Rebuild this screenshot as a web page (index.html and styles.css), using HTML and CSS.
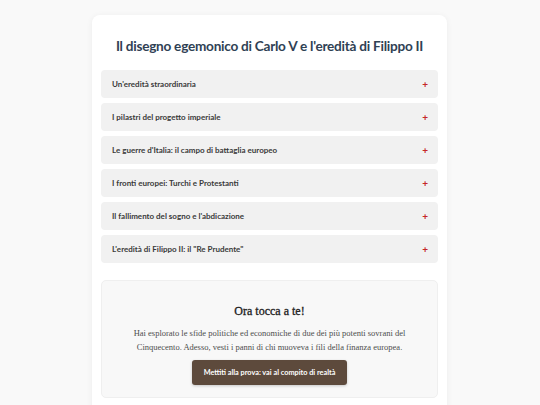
FILE: index.html
```html
<!DOCTYPE html>
<html lang="it">
<head>
<meta charset="utf-8">
<link rel="stylesheet" href="styles.css">
</head>
<body>
<main class="card">
  <h1 class="title">Il disegno egemonico di Carlo V e l'eredità di Filippo II</h1>
  <div class="accordion">
    <div class="item"><span class="label">Un'eredità straordinaria</span><span class="plus">+</span></div>
    <div class="item"><span class="label">I pilastri del progetto imperiale</span><span class="plus">+</span></div>
    <div class="item"><span class="label">Le guerre d'Italia: il campo di battaglia europeo</span><span class="plus">+</span></div>
    <div class="item"><span class="label">I fronti europei: Turchi e Protestanti</span><span class="plus">+</span></div>
    <div class="item"><span class="label">Il fallimento del sogno e l'abdicazione</span><span class="plus">+</span></div>
    <div class="item"><span class="label">L'eredità di Filippo II: il "Re Prudente"</span><span class="plus">+</span></div>
  </div>
  <section class="cta">
    <h2 class="cta-title">Ora tocca a te!</h2>
    <p class="cta-text">Hai esplorato le sfide politiche ed economiche di due dei più potenti sovrani del Cinquecento. Adesso, vesti i panni di chi muoveva i fili della finanza europea.</p>
    <button class="cta-btn">Mettiti alla prova: vai al compito di realtà</button>
  </section>
</main>
</body>
</html>
```
FILE: styles.css
```css
html, body {
  margin: 0;
  padding: 0;
}
body {
  background: #f9f9f9;
  font-family: "Lato", "Open Sans", sans-serif;
  padding-top: 15px;
}
.card {
  width: 355px;
  margin-left: 92px;
  background: #ffffff;
  border-radius: 8px;
  box-shadow: 0 1px 6px rgba(0,0,0,0.06);
  padding: 20px 9px 20px 9px;
  box-sizing: border-box;
}
.title {
  margin: 0 0 13px 0;
  text-align: center;
  white-space: nowrap;
  font-size: 13.6px;
  letter-spacing: -0.25px;
  font-weight: 700;
  color: #2f4154;
  line-height: 22px;
}
.accordion {
  display: flex;
  flex-direction: column;
  gap: 5px;
}
.item {
  display: flex;
  justify-content: space-between;
  align-items: center;
  height: 28px;
  padding: 0 10px 0 11px;
  background: #f1f1f1;
  border-radius: 4px;
}
.label {
  font-size: 8px;
  font-weight: 700;
  color: #3a3a3a;
}
.plus {
  font-size: 10px;
  font-weight: 700;
  color: #c62828;
}
.cta {
  margin-top: 17px;
  background: #f8f8f8;
  border: 1px solid #efefef;
  border-radius: 5px;
  padding: 22px 20px 12px;
  text-align: center;
}
.cta-title {
  margin: 0 0 7px;
  font-family: "Liberation Serif", serif;
  font-size: 12px;
  font-weight: 400;
  color: #222222;
  line-height: 16px;
  -webkit-text-stroke: 0.3px #222222;
}
.cta-text {
  margin: 0 0 5px;
  font-family: "Liberation Serif", serif;
  font-size: 8.5px;
  line-height: 14px;
  color: #4d4d4d;
}
.cta-btn {
  background: #5d4a3c;
  color: #ffffff;
  border: none;
  border-radius: 3px;
  height: 25px;
  padding: 0 12px;
  font-family: "Lato", sans-serif;
  font-size: 7.3px;
  font-weight: 700;
  box-shadow: 0 1px 3px rgba(0,0,0,0.2);
}
```
